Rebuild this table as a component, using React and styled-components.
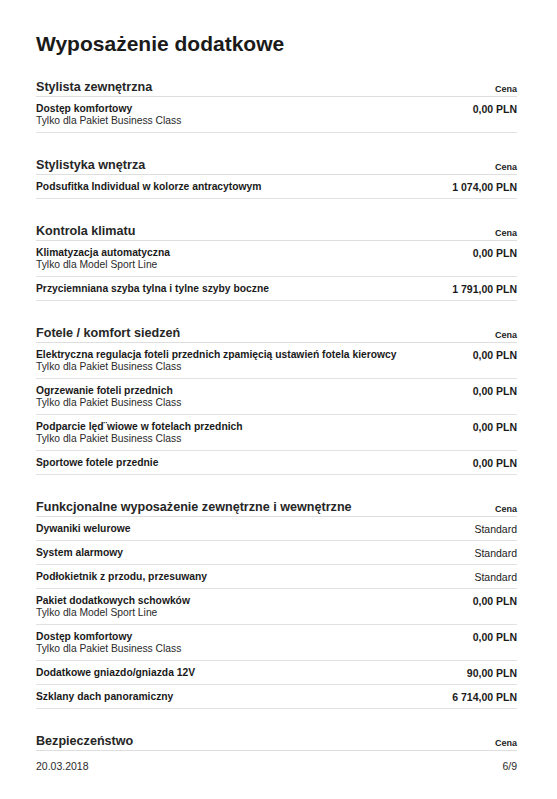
import React from "react";
import styled, { createGlobalStyle } from "styled-components";

const sections = [
    {
        title: "Stylista zewnętrzna",
        items: [
            { name: "Dostęp komfortowy", note: "Tylko dla Pakiet Business Class", price: "0,00 PLN" },
        ],
    },
    {
        title: "Stylistyka wnętrza",
        items: [
            { name: "Podsufitka Individual w kolorze antracytowym", price: "1 074,00 PLN" },
        ],
    },
    {
        title: "Kontrola klimatu",
        items: [
            { name: "Klimatyzacja automatyczna", note: "Tylko dla Model Sport Line", price: "0,00 PLN" },
            { name: "Przyciemniana szyba tylna i tylne szyby boczne", price: "1 791,00 PLN" },
        ],
    },
    {
        title: "Fotele / komfort siedzeń",
        items: [
            {
                name: "Elektryczna regulacja foteli przednich zpamięcią ustawień fotela kierowcy",
                note: "Tylko dla Pakiet Business Class",
                price: "0,00 PLN",
            },
            { name: "Ogrzewanie foteli przednich", note: "Tylko dla Pakiet Business Class", price: "0,00 PLN" },
            { name: "Podparcie lęd¨wiowe w fotelach przednich", note: "Tylko dla Pakiet Business Class", price: "0,00 PLN" },
            { name: "Sportowe fotele przednie", price: "0,00 PLN" },
        ],
    },
    {
        title: "Funkcjonalne wyposażenie zewnętrzne i wewnętrzne",
        items: [
            { name: "Dywaniki welurowe", price: "Standard", standard: true },
            { name: "System alarmowy", price: "Standard", standard: true },
            { name: "Podłokietnik z przodu, przesuwany", price: "Standard", standard: true },
            { name: "Pakiet dodatkowych schowków", note: "Tylko dla Model Sport Line", price: "0,00 PLN" },
            { name: "Dostęp komfortowy", note: "Tylko dla Pakiet Business Class", price: "0,00 PLN" },
            { name: "Dodatkowe gniazdo/gniazda 12V", price: "90,00 PLN" },
            { name: "Szklany dach panoramiczny", price: "6 714,00 PLN" },
        ],
    },
    {
        title: "Bezpieczeństwo",
        items: [],
    },
];

function App() {
    return (
        <>
            <GlobalStyle />
            <Page>
                <PageTitle>Wyposażenie dodatkowe</PageTitle>
                {sections.map((section) => (
                    <Section key={section.title}>
                        <SectionHead>
                            <SectionTitle>{section.title}</SectionTitle>
                            <PriceLabel>Cena</PriceLabel>
                        </SectionHead>
                        {section.items.map((item, i) => (
                            <Row key={i}>
                                <div>
                                    <ItemName>{item.name}</ItemName>
                                    {item.note && <ItemNote>{item.note}</ItemNote>}
                                </div>
                                <Price $standard={item.standard}>{item.price}</Price>
                            </Row>
                        ))}
                    </Section>
                ))}
                <Footer>
                    <span>20.03.2018</span>
                    <span>6/9</span>
                </Footer>
            </Page>
        </>
    );
}

export default App;

const GlobalStyle = createGlobalStyle`
    body {
        margin: 0;
        background: #fff;
        color: #1c1c1c;
        font-family: "Liberation Sans", Arial, sans-serif;
    }
`;

const Page = styled.div`
    padding: 32px 40px 0 36px;
`;

const PageTitle = styled.h1`
    margin: 0;
    font-size: 21px;
    line-height: 24px;
    font-weight: bold;
    color: #1a1a1a;
`;

const Section = styled.section`
    margin-top: 24px;

    &:first-of-type {
        margin-top: 23px;
    }
`;

const SectionHead = styled.div`
    display: flex;
    justify-content: space-between;
    align-items: flex-end;
    padding-bottom: 1px;
    border-bottom: 1px solid #dedede;
`;

const SectionTitle = styled.h2`
    margin: 0;
    font-size: 12.6px;
    line-height: 16px;
    font-weight: bold;
    color: #262626;
`;

const PriceLabel = styled.span`
    font-size: 9px;
    line-height: 11px;
    font-weight: bold;
    color: #222;
`;

const Row = styled.div`
    display: flex;
    justify-content: space-between;
    align-items: flex-start;
    gap: 16px;
    padding: 6px 0 5px;
    border-bottom: 1px solid #e2e2e2;
`;

const ItemName = styled.div`
    font-size: 10.3px;
    line-height: 12px;
    font-weight: bold;
    color: #1a1a1a;
`;

const ItemNote = styled.div`
    font-size: 10.3px;
    line-height: 12px;
    color: #2a2a2a;
`;

const Price = styled.div`
    font-size: 10.5px;
    line-height: 12px;
    font-weight: ${(p) => (p.$standard ? "normal" : "bold")};
    color: #1a1a1a;
    white-space: nowrap;
`;

const Footer = styled.div`
    display: flex;
    justify-content: space-between;
    margin-top: 9px;
    font-size: 10.5px;
    line-height: 12px;
    color: #2a2a2a;
`;
